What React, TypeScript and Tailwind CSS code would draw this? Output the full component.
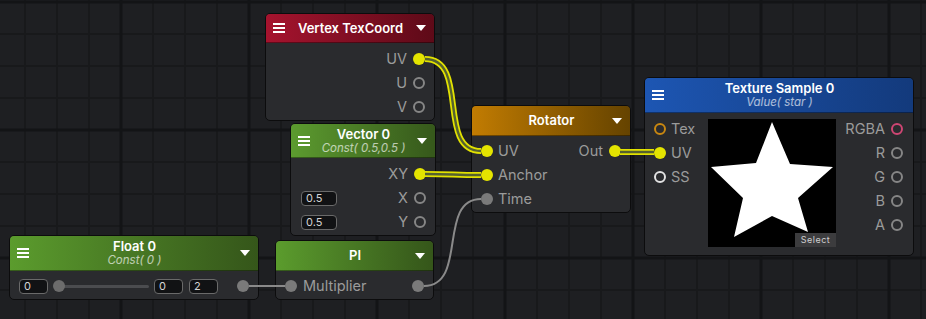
import React from "react";

type PortKind = "yellow" | "gray" | "ring" | "orange" | "white" | "pink";

function Port({ kind }: { kind: PortKind }) {
  if (kind === "yellow") return <span className="block w-3 h-3 shrink-0 rounded-full bg-[#e4e400]" />;
  if (kind === "gray") return <span className="block w-3 h-3 shrink-0 rounded-full bg-[#7a7a7a]" />;
  let border = "border-[#868686]";
  if (kind === "orange") border = "border-[#c98710]";
  if (kind === "white") border = "border-[#e2e2e2]";
  if (kind === "pink") border = "border-[#cf4673]";
  return <span className={`block w-3 h-3 shrink-0 rounded-full border-2 bg-[#2a2b2e] ${border}`} />;
}

function Menu() {
  return (
    <div className="flex flex-col gap-[2px] w-3 shrink-0">
      <span className="block h-[2px] bg-white" />
      <span className="block h-[2px] bg-white" />
      <span className="block h-[2px] bg-white" />
    </div>
  );
}

function Caret() {
  return (
    <svg width="10" height="6" viewBox="0 0 10 6" className="shrink-0">
      <polygon points="0,0 10,0 5,6" fill="#fff" />
    </svg>
  );
}

function Header({
  title,
  sub,
  bg,
  h,
  menu = true,
  caret = true,
}: {
  title: string;
  sub?: string;
  bg: string;
  h: string;
  menu?: boolean;
  caret?: boolean;
}) {
  return (
    <div className={`flex items-center pl-[7px] pr-[8px] border-b border-black/40 ${bg} ${h}`}>
      {menu ? <Menu /> : <span className="w-3 shrink-0" />}
      <div className="flex-1 flex flex-col items-center leading-none">
        <span className="text-[13px] font-semibold text-white leading-[15px]">{title}</span>
        {sub && <span className="text-[11.5px] italic text-white/65 leading-[13px]">{sub}</span>}
      </div>
      {caret ? <Caret /> : <span className="w-[10px] shrink-0" />}
    </div>
  );
}

function Field({ v, w }: { v: string; w: string }) {
  return (
    <span className={`block h-[15px] rounded-[4px] border border-[#6a6a6a] bg-[#111214] pl-[4px] text-[11px] leading-[13px] text-[#d4d4d4] ${w}`}>
      {v}
    </span>
  );
}

const label = "text-[14.5px] text-[#9b9b9b] leading-none";
const nodeBox = "absolute rounded-[5px] border border-[#0c0c0d] bg-[#2a2b2e] overflow-hidden";

function Grid() {
  const minorV: number[] = [];
  const minorH: number[] = [];
  for (let x = 25; x < 926; x += 32) minorV.push(x);
  for (let y = 2; y < 319; y += 32) minorH.push(y);
  return (
    <svg className="absolute inset-0" width="926" height="319">
      <rect width="926" height="319" fill="#1e1f22" />
      {minorV.map((x) => (
        <rect key={"v" + x} x={x - 1} y="0" width="2" height="319" fill="#18191b" />
      ))}
      {minorH.map((y) => (
        <rect key={"h" + y} x="0" y={y - 1} width="926" height="2" fill="#18191b" />
      ))}
      {minorV.filter((x) => (x - 121) % 128 === 0).map((x) => (
        <rect key={"V" + x} x={x - 1.5} y="0" width="3" height="319" fill="#131416" />
      ))}
      {minorH.filter((y) => (y - 2) % 128 === 0).map((y) => (
        <rect key={"H" + y} x="0" y={y - 1.5} width="926" height="3" fill="#131416" />
      ))}
    </svg>
  );
}

function Wires() {
  const yellow = [
    "M425 59 C470 59 436 151 481 151",
    "M425 174 C453 174 453 175 481 175",
    "M620 152 L654 152",
  ];
  const gray = ["M424 286 C468 286 437 199 481 199", "M249 286 L285 286"];
  return (
    <svg className="absolute inset-0 pointer-events-none z-20" width="926" height="319">
      {yellow.map((d) => (
        <g key={d} fill="none">
          <path d={d} stroke="#e2e200" strokeWidth="6" />
          <path d={d} stroke="#56622f" strokeWidth="2.4" />
        </g>
      ))}
      {gray.map((d) => (
        <path key={d} d={d} fill="none" stroke="#8a8a8a" strokeWidth="2" />
      ))}
    </svg>
  );
}

export default function App() {
  return (
    <div className="relative w-[926px] h-[319px] overflow-hidden bg-[#1e1f22] font-['Inter',_'Noto_Sans',_sans-serif]">
      <Grid />

      {/* Vertex TexCoord */}
      <div className={`${nodeBox} left-[265px] top-[13px] w-[170px] h-[108px] z-10`}>
        <Header title="Vertex TexCoord" bg="bg-linear-to-r from-[#a6132e] to-[#5e0a18]" h="h-[29px]" />
        <div className="flex flex-col items-end pt-[4px] pr-[9px]">
          {[
            ["UV", "yellow"],
            ["U", "ring"],
            ["V", "ring"],
          ].map(([t, k]) => (
            <div key={t} className="flex items-center gap-[6px] h-6">
              <span className={label}>{t}</span>
              <Port kind={k as PortKind} />
            </div>
          ))}
        </div>
      </div>

      {/* Vector 0 */}
      <div className={`${nodeBox} left-[290px] top-[123px] w-[146px] h-[113px] z-10`}>
        <Header title="Vector 0" sub="Const( 0.5,0.5 )" bg="bg-linear-to-r from-[#5c9b2f] to-[#36581b]" h="h-[34px]" />
        <div className="flex flex-col pt-[4px] pl-[10px] pr-[9px]">
          <div className="flex items-center justify-end gap-[6px] h-6">
            <span className={label}>XY</span>
            <Port kind="yellow" />
          </div>
          {["X", "Y"].map((t) => (
            <div key={t} className="flex items-center h-6">
              <Field v="0.5" w="w-[36px]" />
              <span className={`${label} ml-auto mr-[6px]`}>{t}</span>
              <Port kind="ring" />
            </div>
          ))}
        </div>
      </div>

      {/* Rotator */}
      <div className={`${nodeBox} left-[471px] top-[105px] w-[160px] h-[108px] z-10`}>
        <Header title="Rotator" bg="bg-linear-to-r from-[#c27c02] to-[#654300]" h="h-[30px]" menu={false} />
        <div className="flex justify-between pt-[3px] pl-[9px] pr-[9px]">
          <div className="flex flex-col">
            {[
              ["UV", "yellow"],
              ["Anchor", "yellow"],
              ["Time", "gray"],
            ].map(([t, k]) => (
              <div key={t} className="flex items-center gap-[5px] h-6">
                <Port kind={k as PortKind} />
                <span className={label}>{t}</span>
              </div>
            ))}
          </div>
          <div className="flex items-center gap-[6px] h-6">
            <span className={label}>Out</span>
            <Port kind="yellow" />
          </div>
        </div>
      </div>

      {/* Texture Sample 0 */}
      <div className={`${nodeBox} left-[644px] top-[77px] w-[270px] h-[179px] z-10`}>
        <Header title="Texture Sample 0" sub="Value( star )" bg="bg-linear-to-r from-[#1d56b3] to-[#133a7c]" h="h-[35px]" caret={false} />
        <div className="flex">
          <div className="flex flex-col w-[63px] pt-[4px] pl-[9px]">
            {[
              ["Tex", "orange"],
              ["UV", "yellow"],
              ["SS", "white"],
            ].map(([t, k]) => (
              <div key={t} className="flex items-center gap-[5px] h-6">
                <Port kind={k as PortKind} />
                <span className={label}>{t}</span>
              </div>
            ))}
          </div>
          <div className="relative mt-[6px] w-[128px] h-[128px] bg-black">
            <svg width="128" height="128" viewBox="0 0 128 128">
              <polygon
                points="64,3 48,44 3,48 35,79 26,118 64,97 100,113 90,79 125,48 82,45"
                fill="#fff"
              />
            </svg>
            <span className="absolute right-0 bottom-0 w-[41px] h-[14px] bg-[#3c3c3e] text-[9px] leading-[14px] text-center text-[#cfcfcf] tracking-[0.5px]">
              Select
            </span>
          </div>
          <div className="flex-1 flex flex-col items-end pt-[4px] pr-[10px]">
            {[
              ["RGBA", "pink"],
              ["R", "ring"],
              ["G", "ring"],
              ["B", "ring"],
              ["A", "ring"],
            ].map(([t, k]) => (
              <div key={t} className="flex items-center gap-[6px] h-6">
                <span className={label}>{t}</span>
                <Port kind={k as PortKind} />
              </div>
            ))}
          </div>
        </div>
      </div>

      {/* Float 0 */}
      <div className={`${nodeBox} left-[9px] top-[235px] w-[250px] h-[65px] z-10`}>
        <Header title="Float 0" sub="Const( 0 )" bg="bg-linear-to-r from-[#5b9c2d] to-[#35561a]" h="h-[35px]" />
        <div className="flex items-center h-6 mt-[3px] pl-[9px] pr-[9px]">
          <Field v="0" w="w-[29px]" />
          <div className="relative ml-[5px] w-[96px] h-3 flex items-center">
            <span className="block ml-[6px] flex-1 h-[3px] rounded-full bg-[#4b4c4f]" />
            <span className="absolute left-0 top-0 w-3 h-3 rounded-full bg-[#6c6c6c]" />
          </div>
          <span className="ml-[5px]">
            <Field v="0" w="w-[29px]" />
          </span>
          <span className="ml-[6px]">
            <Field v="2" w="w-[29px]" />
          </span>
          <span className="ml-auto">
            <Port kind="gray" />
          </span>
        </div>
      </div>

      {/* PI */}
      <div className={`${nodeBox} left-[275px] top-[240px] w-[159px] h-[60px] z-10`}>
        <Header title="PI" bg="bg-linear-to-r from-[#5b9c2d] to-[#35561a]" h="h-[30px]" menu={false} />
        <div className="flex items-center h-6 mt-[3px] pl-[9px] pr-[9px]">
          <Port kind="gray" />
          <span className={`${label} ml-[6px]`}>Multiplier</span>
          <span className="ml-auto">
            <Port kind="gray" />
          </span>
        </div>
      </div>

      <Wires />
    </div>
  );
}
